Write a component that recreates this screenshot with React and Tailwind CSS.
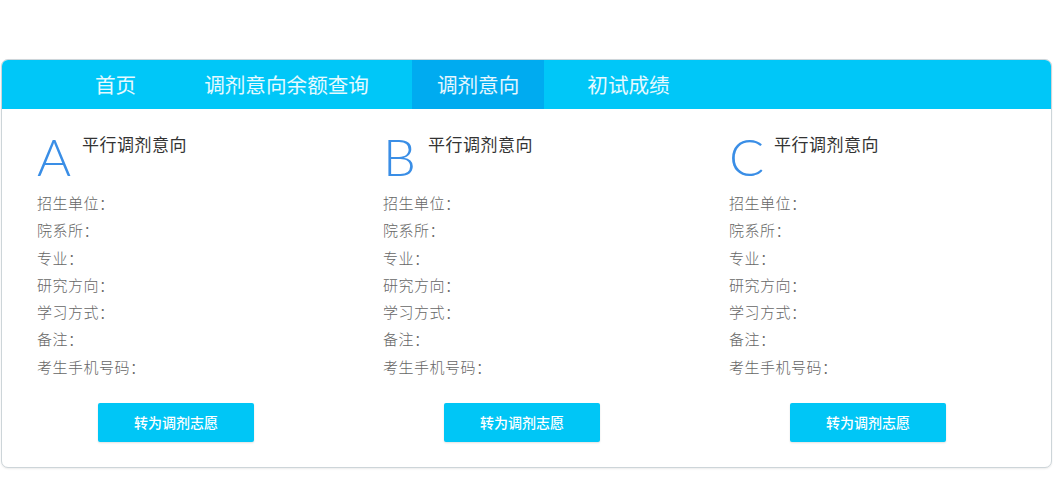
const tabs = [
  { id: 'home', label: '首页' },
  { id: 'balance', label: '调剂意向余额查询' },
  { id: 'intent', label: '调剂意向' },
  { id: 'score', label: '初试成绩' },
];

const fields = ['招生单位', '院系所', '专业', '研究方向', '学习方式', '备注', '考生手机号码'];

const cn = { fontFamily: '"Noto Sans CJK SC", "Noto Sans", sans-serif' };

function IntentColumn({ letter }) {
  return (
    <div className="w-[346px] shrink-0">
      <div className="flex items-start h-[51px]">
        <span
          className="text-[52px] leading-none font-light text-[#3a8ee6] w-[45px]"
          style={{ fontFamily: 'Lato, "Open Sans", sans-serif' }}
        >
          {letter}
        </span>
        <span className="text-[17px] text-[#333] mt-[1px] tracking-[0.5px]">平行调剂意向</span>
      </div>
      <ul className="mt-[8px] text-[15px] leading-[27.3px] text-[#666] font-light tracking-[0.5px]">
        {fields.map((f) => (
          <li key={f}>{f}：</li>
        ))}
      </ul>
      <button className="ml-[61px] mt-[23px] w-[156px] h-[39px] bg-[#00c6f6] text-white text-[14px] font-medium rounded-[2px] shadow-[0_1px_2px_rgba(0,0,0,0.12)]">
        转为调剂志愿
      </button>
    </div>
  );
}

export default function App() {
  const active = 'intent';
  return (
    <div className="w-[1053px] h-[500px] bg-white pt-[59px] px-[1px]" style={cn}>
      <div className="h-[409px] rounded-[7px] border border-[#cdd5d9] overflow-hidden bg-white shadow-[0_1px_2px_rgba(0,0,0,0.08)]">
        {/* nav bar */}
        <div className="h-[49px] bg-[#00c7f8] flex items-stretch pl-[68px] gap-[18px]">
          {tabs.map((t) => (
            <div
              key={t.id}
              className={`px-[25px] flex items-center text-[20.6px] text-white/90 ${active === t.id ? 'bg-[#00abf0]' : ''}`}
            >
              {t.label}
            </div>
          ))}
        </div>

        {/* columns */}
        <div className="flex pl-[35px] pt-[21px]">
          <IntentColumn letter="A" />
          <IntentColumn letter="B" />
          <IntentColumn letter="C" />
        </div>
      </div>
    </div>
  );
}
